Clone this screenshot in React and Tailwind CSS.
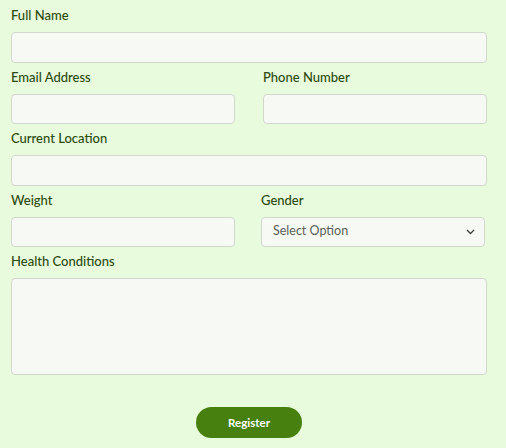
export default function App() {
  const label = "block h-[20px] leading-[18px] text-[13px] font-medium text-[#2c4a0e] mb-[6px]";
  const input = "block w-full h-[30.5px] rounded-[4px] border border-[#d2d7cd] bg-[#f7f9f5] mb-[5px]";
  return (
    <div className="w-[506px] h-[448px] bg-[#e8fbdc] pt-[6px] pl-[11px] pr-[19px]" style={{ fontFamily: "Lato, 'Noto Sans', sans-serif" }}>
      <label className={label}>Full Name</label>
      <div className={input}></div>
      <div className="grid grid-cols-2 gap-x-[28px]">
        <div>
          <label className={label}>Email Address</label>
          <div className={input}></div>
        </div>
        <div>
          <label className={label}>Phone Number</label>
          <div className={input}></div>
        </div>
      </div>
      <label className={label}>Current Location</label>
      <div className={input}></div>
      <div className="grid grid-cols-2 gap-x-[28px]">
        <div>
          <label className={label}>Weight</label>
          <div className={input}></div>
        </div>
        <div className="-ml-[2px] mr-[2px]">
          <label className={label}>Gender</label>
          <div className="flex items-center justify-between w-full h-[30.5px] rounded-[4px] border border-[#d2d7cd] bg-[#f7f9f5] mb-[5px] pl-[11px] pr-[9px]">
            <span className="text-[12.5px] text-[#5b5f58]">Select Option</span>
            <svg width="9" height="6" viewBox="0 0 9 6" fill="none">
              <path d="M1 1l3.5 3.5L8 1" stroke="#444" strokeWidth="1.4" />
            </svg>
          </div>
        </div>
      </div>
      <label className={label}>Health Conditions</label>
      <div className="w-full h-[97px] rounded-[4px] border border-[#d2d7cd] bg-[#f7f9f5]"></div>
      <div className="flex justify-center mt-[32px]">
        <button className="w-[106px] h-[31px] rounded-full bg-[#47800f] text-white text-[11.5px] font-bold">Register</button>
      </div>
    </div>
  );
}
